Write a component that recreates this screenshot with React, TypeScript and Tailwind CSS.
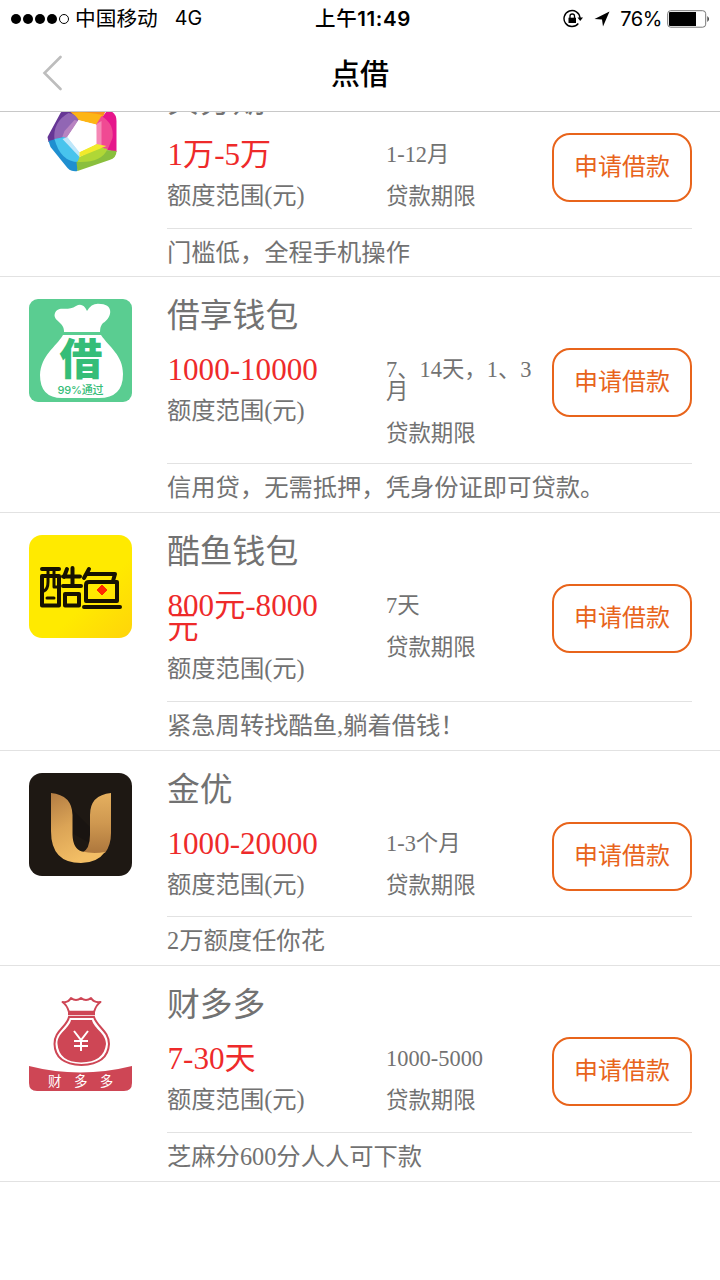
import { ReactNode } from "react";

type Loan = {
	name: string;
	amount: string;
	term: string;
	desc: string;
	icon: ReactNode;
	rowClass: string;
	detailClass: string;
};

const RingIcon = () => (
	<svg viewBox="0.500 1 103 103" className="h-[103px] w-[103px]">
		<path d="M34 26 Q38 14 49 15 L79 24 L71 41 L50 37 L33 42 Z" fill="#f7931e" />
		<path d="M38 31 Q50 27 74 32 L70 42 L49 37 L44 35 Z" fill="#fdb515" />
		<path d="M79 27 Q88 29 88 38 L88 69 L78 67 L68 62 L68 42 Z" fill="#e6168b" />
		<path d="M73 33 Q86 41 84 55 L79 67 L67 62 L68 41 Z" fill="#f04a93" />
		<path d="M68 41 L73 38 L73 63 L67 62 Z" fill="#f587b5" />
		<path d="M19 54 L32 30 Q38 22 50 37 L39 49 L36 56 L20 59 Z" fill="#663695" />
		<path d="M26 57 Q24 39 40 30 Q47 31 50 37 L39 49 L36 56 Z" fill="#9166b4" />
		<path d="M46 37 L36 48 L33 56 L38 55 L50 38 Z" fill="#b884c1" />
		<path d="M20 58 L35 54 L51 74 L49 88 Q43 89 39 85 L22 64 Z" fill="#1f8fd0" />
		<path d="M26 56 L36 54 L51 72 L50 79 Q32 79 26 56 Z" fill="#48c4ed" />
		<path d="M34 56 L39 54 L51 69 L51 74 Z" fill="#bfe7fa" />
		<path d="M48 79 L78 67 L88 68 Q88 75 81 77 L49 88 Z" fill="#8abf3d" />
		<path d="M51 74 L70 64 L79 66 Q73 80 49 79 Z" fill="#b0d736" />
		<path d="M51 69 L68 61 L78 63 L51 74 Z" fill="#f1ea2c" />
		<path d="M50 37 L68 42 L68 61 L51 69 L39 54 Z" fill="#fff" />
	</svg>
);

const BagIcon = () => (
	<svg viewBox="0 0 103 103" className="h-[103px] w-[103px]">
		<rect width="103" height="103" rx="9" fill="#5acd91" />
		<path
			d="M35 33 C36 23 23 22 26 14 C29 6 39 13 47 7 Q54 3 58 12 Q63 3 72 5 C86 6 82 20 74 24 Q71 27 71 33 Z"
			fill="#fff"
		/>
		<path d="M34 36 H72 C80 48 94 56 94 75 Q94 99 70 99 H33 Q11 99 11 76 C12 56 27 48 34 36 Z" fill="#fff" />
		<text x="52" y="76" textAnchor="middle" fontSize="43" fontWeight="900" fill="#35bd78" fontFamily="Noto Sans CJK SC, sans-serif">
			借
		</text>
		<text x="51.500" y="94.500" textAnchor="middle" fontSize="11" fontWeight="500" fill="#35bd78" fontFamily="Inter, Noto Sans CJK SC, sans-serif" textLength="46">
			99%通过
		</text>
	</svg>
);

const FishIcon = () => (
	<svg viewBox="0 0 103 103" className="h-[103px] w-[103px]">
		<defs>
			<linearGradient id="fish" x1="0" y1="0" x2="1" y2="1">
				<stop offset="0.6" stopColor="#ffea00" />
				<stop offset="1" stopColor="#ffd40a" />
			</linearGradient>
		</defs>
		<rect width="103" height="103" rx="13" fill="url(#fish)" />
		<g fill="none" stroke="#161200" strokeWidth="4" strokeLinecap="round" strokeLinejoin="round">
			<path d="M13 34 H30 M13 70.500 V41 H30 V70.500 Z" />
			<path d="M19 35 V47 Q19 54 15 56 M25 35 V52 H29 M18 63 H25" strokeWidth="3" />
			<path d="M38 34 L35 42 M34 41.500 H51 M43.500 33 V50 M34 51 H52 M36 59 H50 V70.500 H36 Z" />
			<path d="M60 34 L55 43 M59 39 H86 L84 46 M60 47 H88 V66 H57 V50 Q57 47 60 47 M55 72 H91" />
		</g>
		<path d="M73 50 L78 55 L73 60 L68 55 Z" fill="#ff2a00" stroke="#ff2a00" strokeLinejoin="round" />
	</svg>
);

const GoldIcon = () => (
	<svg viewBox="0 0 103 103" className="h-[103px] w-[103px]">
		<defs>
			<linearGradient id="goldLeft" x1="0" y1="0" x2="0.4" y2="1">
				<stop offset="0" stopColor="#b27c43" />
				<stop offset="0.5" stopColor="#dba456" />
				<stop offset="1" stopColor="#f3be65" />
			</linearGradient>
			<linearGradient id="goldRight" x1="0" y1="0" x2="0" y2="1">
				<stop offset="0" stopColor="#e5b05f" />
				<stop offset="0.5" stopColor="#cf9850" />
				<stop offset="1" stopColor="#ad773d" />
			</linearGradient>
		</defs>
		<rect width="103" height="103" rx="13" fill="#1e1813" />
		<path d="M43 36 L61 54 V70 L43 60 Z" fill="#191411" />
		<path d="M82 20 V60 Q82 72 76 80 H53 Q61 76 61 62 V42 Q61 22 82 20 Z" fill="url(#goldRight)" />
		<path
			d="M22 20 Q43 22 43.500 42 V62 Q44 76 53 78.500 Q64 81 76 79 Q68 90 52 90 Q22 90 22 58 Z"
			fill="url(#goldLeft)"
		/>
	</svg>
);

const MoneyBagIcon = () => (
	<svg viewBox="0 -5 103 103" className="h-[103px] w-[103px] overflow-visible">
		<path
			d="M40 19 Q38 12 33.500 9 Q39 10 42 5 Q47 9 52 5 Q57 9 62 5 Q65 10 71.500 9 Q67 12 65 19"
			fill="none"
			stroke="#ce4655"
			strokeWidth="2"
			strokeLinejoin="round"
		/>
		<path d="M39 20 H66" stroke="#ce4655" strokeWidth="4.500" />
		<path d="M40 24 H65 C68 34 80 38 80 51 Q79 71 52.500 72 Q26 71 25.500 51 C25 38 38 34 40 24 Z" fill="#fff" stroke="#ce4655" strokeWidth="2" />
		<path d="M42 27 H63 C65 36 77 40 77 51 Q75 69 52 69.500 Q30 69 28.500 51 C28 40 40 36 42 27 Z" fill="#ce4655" />
		<path d="M45 38 L52 47 L59 38 M52 47 V58 M45 48 H59 M45 53 H59" fill="none" stroke="#fff" strokeWidth="2" />
		<path d="M0 73 Q51 86 103 73 V90 Q103 98 95 98 H8 Q0 98 0 90 Z" fill="#ce4655" />
		<text x="19" y="93" fontSize="13.500" fill="#fff" letterSpacing="12.400" fontFamily="Noto Sans CJK SC, sans-serif">
			财多多
		</text>
	</svg>
);

const loans: Loan[] = [
	{
		name: "贝分期",
		amount: "1万-5万",
		term: "1-12月",
		desc: "门槛低，全程手机操作",
		icon: <RingIcon />,
		rowClass: "h-[215px]",
		detailClass: "h-[167px]",
	},
	{
		name: "借享钱包",
		amount: "1000-10000",
		term: "7、14天，1、3月",
		desc: "信用贷，无需抵押，凭身份证即可贷款。",
		icon: <BagIcon />,
		rowClass: "h-[236px]",
		detailClass: "h-[187px]",
	},
	{
		name: "酷鱼钱包",
		amount: "800元-8000元",
		term: "7天",
		desc: "紧急周转找酷鱼,躺着借钱！",
		icon: <FishIcon />,
		rowClass: "h-[238px]",
		detailClass: "h-[189px]",
	},
	{
		name: "金优",
		amount: "1000-20000",
		term: "1-3个月",
		desc: "2万额度任你花",
		icon: <GoldIcon />,
		rowClass: "h-[215px]",
		detailClass: "h-[166px]",
	},
	{
		name: "财多多",
		amount: "7-30天",
		term: "1000-5000",
		desc: "芝麻分600分人人可下款",
		icon: <MoneyBagIcon />,
		rowClass: "h-[216px]",
		detailClass: "h-[167px]",
	},
];

const StatusBar = () => (
	<div className="flex h-[37px] items-center justify-between pl-[11px] pr-[10px] font-['Inter','Noto_Sans_CJK_SC',sans-serif] text-[20px] text-black">
		<div className="flex w-[290px] items-center">
			<div className="flex gap-[2px]">
				{[1, 2, 3, 4].map((dot) => (
					<span key={dot} className="h-[10px] w-[10px] rounded-full bg-black" />
				))}
				<span className="h-[10px] w-[10px] rounded-full border border-black" />
			</div>
			<span className="ml-[6px] text-[20.700px] leading-[37px]">中国移动</span>
			<span className="ml-[17px] text-[19.700px]">4G</span>
		</div>
		<span className="whitespace-nowrap pl-[5px] text-[20.500px] font-medium leading-[37px] tracking-[0.6px]">
			上午<span className="font-semibold">11:49</span>
		</span>
		<div className="flex w-[290px] items-center justify-end">
			<svg viewBox="0 0 20 20" className="h-[20px] w-[20px]">
				<path d="M15.300 14.500 A8 8 0 1 1 17 9" fill="none" stroke="#000" strokeWidth="1.400" />
				<path d="M14.500 8.500 H20 L17.200 12 Z" />
				<path d="M5.500 8.700 H13 V14 H5.500 Z" />
				<path d="M7 9 V7 Q7 5 9.250 5 Q11.500 5 11.500 7 V9" fill="none" stroke="#000" strokeWidth="1.300" />
			</svg>
			<svg viewBox="0 0 16 16" className="ml-[11px] h-[16px] w-[16px]">
				<path d="M0.500 8 L15.500 0.500 L9 15.500 L8 8.500 Z" />
			</svg>
			<span className="ml-[10px] text-[20px] tracking-[-0.4px]">76%</span>
			<svg viewBox="0 0 43 18" className="ml-[5px] h-[18px] w-[43px]">
				<rect x="0.700" y="0.700" width="38" height="16.500" rx="3" fill="none" stroke="#777" />
				<path d="M3 2 H29 V16 H3 Q2 16 2 15 V3 Q2 2 3 2 Z" />
				<path d="M40.500 6 Q43 9 40.500 12 Z" />
			</svg>
		</div>
	</div>
);

const LoanRow = ({ loan }: { loan: Loan }) => (
	<li className={`flex shrink-0 border-b border-[#e2e2e2] pl-[29px] pr-[28px] ${loan.rowClass}`}>
		<div className="w-[138px] shrink-0 pt-[22px]">{loan.icon}</div>
		<div className="min-w-0 flex-1">
			<div className={`border-b border-[#e2e2e2] pt-[15px] ${loan.detailClass}`}>
				<h2 className="h-[48px] whitespace-nowrap text-[32.800px] leading-[48px]">{loan.name}</h2>
				<div className="flex">
					<div className="w-[219px] shrink-0 pt-[19px]">
						<p className="w-[155px] break-all pl-[0.500px] text-[31.100px] leading-[22px] text-[#ee2a2a]">{loan.amount}</p>
						<p className="mt-[18px] text-[24.300px] leading-[24px]">额度范围(元)</p>
					</div>
					<div className="w-[166px] shrink-0 pt-[19px]">
						<p className="w-[150px] break-all text-[22.400px] leading-[22px]">{loan.term}</p>
						<p className="mt-[19px] text-[22.400px] leading-[24px]">贷款期限</p>
					</div>
					<button className="mt-[8px] h-[69px] w-[140px] shrink-0 rounded-[18px] border-2 border-[#e8641b] pb-[2px] text-[24px] text-[#e8641b]">
						申请借款
					</button>
				</div>
			</div>
			<p className="whitespace-nowrap text-[24.300px] leading-[47px]">{loan.desc}</p>
		</div>
	</li>
);

export default function App() {
	return (
		<div className="flex h-[1280px] w-[720px] flex-col overflow-hidden bg-white font-['Liberation_Serif','Noto_Sans_CJK_SC',sans-serif] text-[#727272]">
			<header className="h-[112px] shrink-0 border-b border-[#c8c8c8]">
				<StatusBar />
				<div className="flex h-[72px] items-center pl-[42px] pr-[62px]">
					<svg viewBox="0 0 20 36" className="h-[36px] w-[20px]">
						<path d="M18.500 2 L2.500 18 L18.500 34" fill="none" stroke="#bdbdbd" strokeWidth="2.600" strokeLinecap="round" />
					</svg>
					<h1 className="flex-1 pb-[3px] text-center font-['Noto_Sans_CJK_SC',sans-serif] text-[29px] font-medium leading-[72px] text-black">点借</h1>
				</div>
			</header>
			<main className="flex flex-1 flex-col justify-start overflow-hidden">
				<ul className="-mt-[50px] flex flex-col">
					{loans.map((loan) => (
						<LoanRow key={loan.name} loan={loan} />
					))}
				</ul>
			</main>
		</div>
	);
}
